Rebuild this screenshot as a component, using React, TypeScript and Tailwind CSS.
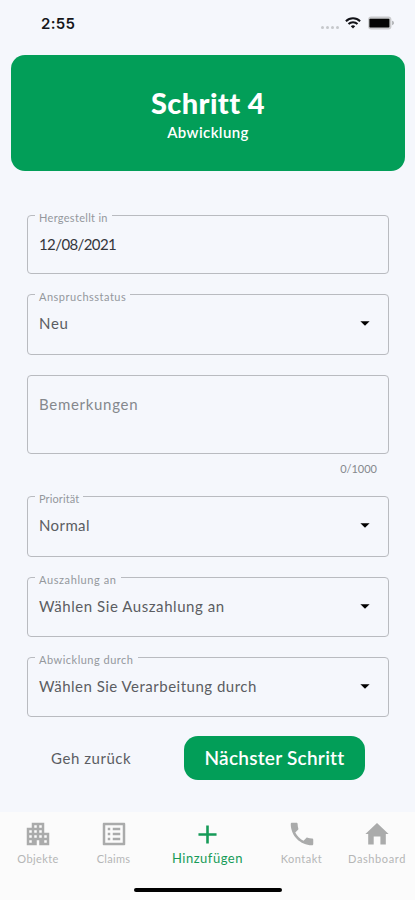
import type { ReactNode } from "react";
import { MdAdd, MdApartment, MdListAlt, MdPhone } from "react-icons/md";
import clsx from "clsx";

interface FieldProps {
  label: string;
  value: string;
  className: string;
  legendClass: string;
  valueClass: string;
  select?: boolean;
}

function Field({ label, value, className, legendClass, valueClass, select = false }: FieldProps) {
  return (
    <fieldset className={clsx("rounded-[4px] border border-[#b9bbc0] pl-[7px] pr-[18px]", className)}>
      <legend className="h-[10px] px-1 text-[11px] leading-[16px] text-[#94979c]">
        <span className={clsx("block whitespace-nowrap", legendClass)}>{label}</span>
      </legend>
      <div className="flex h-[48px] items-center justify-between pl-1">
        <span className={clsx("whitespace-nowrap text-[15px] leading-5", valueClass)}>{value}</span>
        {select && (
          <svg width="10" height="5" viewBox="0 0 10 5" className="fill-black">
            <path d="M.4.2h9.2L5 4.8z" />
          </svg>
        )}
      </div>
    </fieldset>
  );
}

function HomeIcon() {
  return (
    <svg width="24" height="22" viewBox="0 0 24 22" className="fill-current">
      <path d="M12 0l11.6 11h-2.8v10.6h-5.4v-8.1H8.7v8.1H3.2V11H.4z" />
    </svg>
  );
}

interface TabProps {
  label: string;
  icon: ReactNode;
  width: string;
  labelClass: string;
  active?: boolean;
}

function Tab({ label, icon, width, labelClass, active = false }: TabProps) {
  return (
    <button className={clsx("flex shrink-0 flex-col items-center", width, active ? "text-[#169b58]" : "text-[#aaabab]")}>
      <span className="flex h-[30px] items-center justify-center">{icon}</span>
      <span className={clsx("whitespace-nowrap", labelClass)}>{label}</span>
    </button>
  );
}

function StatusBar() {
  return (
    <header className="flex h-[55px] items-start justify-between pl-[41px] pr-[20px] pt-[14px]">
      <span className="font-['Inter',sans-serif] text-[15px] font-semibold leading-[19px] tracking-[0.3px] text-[#16171b]">2:55</span>
      <div className="flex h-[18px] items-center">
        <div className="mr-[6px] mt-[8px] flex gap-[2px]">
          <i className="size-[3px] rounded-full bg-[#c6c8cc]" />
          <i className="size-[3px] rounded-full bg-[#c6c8cc]" />
          <i className="size-[3px] rounded-full bg-[#c6c8cc]" />
          <i className="size-[3px] rounded-full bg-[#c6c8cc]" />
        </div>
        <svg width="16" height="12" viewBox="0 0 16 12" fill="none" className="mr-[7px] stroke-[#111217]" strokeWidth="2">
          <path d="M.9 4.2a10.2 10.2 0 0 1 14.2 0M3.5 7a6.4 6.4 0 0 1 9 0" />
          <path d="M8 11.6L5.8 9.3a3.2 3.2 0 0 1 4.4 0z" className="fill-[#111217]" stroke="none" />
        </svg>
        <svg width="27" height="14" viewBox="0 0 27 14">
          <rect x=".2" y=".4" width="23.2" height="13.2" rx="3" fill="#c9cacc" />
          <rect x="1.4" y="2.7" width="20" height="8.8" rx=".8" fill="#050505" />
          <path d="M24.2 4.8c2.2.5 2.2 3.9 0 4.4z" fill="#a8aaac" />
        </svg>
      </div>
    </header>
  );
}

export default function App() {
  return (
    <div className="flex h-[900px] w-[415px] flex-col overflow-hidden bg-[#f5f7fc] font-['Lato','Open_Sans',sans-serif]">
      <StatusBar />

      <section className="mx-[11px] mr-[10px] flex h-[116px] flex-col items-center rounded-[14px] bg-[#029e58] pt-[31px] text-white">
        <h1 className="text-[29px] font-black leading-[34px] tracking-[0.4px]">Schritt 4</h1>
        <p className="text-[15px] font-semibold leading-[25px] tracking-[0.4px]">Abwicklung</p>
      </section>

      <main className="flex flex-1 flex-col pl-[27px] pr-[26px] pt-[39px]">
        <Field label="Hergestellt in" value="12/08/2021" className="h-[64px]" legendClass="tracking-[0.3px]" valueClass="tracking-[-0.6px] text-[#34363b]" />
        <Field label="Anspruchsstatus" value="Neu" select className="mt-[15px] h-[66px]" legendClass="tracking-[0.5px]" valueClass="tracking-[0.7px] text-[#5b5d62]" />

        <div className="mt-5 h-[79px] rounded-[4px] border border-[#b9bbc0] px-[11px] pt-[16px]">
          <span className="text-[15px] leading-5 tracking-[0.7px] text-[#85888d]">Bemerkungen</span>
        </div>
        <p className="mt-[7px] h-4 pr-[12px] text-right text-[11px] leading-4 text-[#85888d]">0/1000</p>

        <Field label="Priorität" value="Normal" select className="mt-[14px] h-[66px]" legendClass="tracking-[0.1px]" valueClass="tracking-[0.4px] text-[#5b5d62]" />
        <Field label="Auszahlung an" value="Wählen Sie Auszahlung an" select className="mt-[15px] h-[65px]" legendClass="tracking-[0.6px]" valueClass="tracking-[0.56px] text-[#5b5d62]" />
        <Field label="Abwicklung durch" value="Wählen Sie Verarbeitung durch" select className="mt-[15px] h-[65px]" legendClass="tracking-[0.5px]" valueClass="tracking-[0.5px] text-[#5b5d62]" />

        <div className="mt-[19px] flex h-[44px] items-center pl-[24px]">
          <button className="w-[80px] whitespace-nowrap text-left text-[15px] leading-5 tracking-[0.55px] text-[#5b5d62]">Geh zurück</button>
          <button className="ml-[53px] h-[44px] w-[181px] whitespace-nowrap rounded-[14px] bg-[#029e58] text-[19px] font-semibold tracking-[0.25px] text-white">
            Nächster Schritt
          </button>
        </div>
      </main>

      <footer className="flex h-[88px] shrink-0 flex-col items-center bg-[#fbfbfb] pt-[7px]">
        <nav className="flex h-[68px] w-full">
          <Tab label="Objekte" icon={<MdApartment size={30} />} width="w-[76px]" labelClass="text-[11px] leading-5 tracking-[0.4px] text-[#b5b6b6]" />
          <Tab label="Claims" icon={<MdListAlt size={30} />} width="w-[75px]" labelClass="text-[11px] leading-5 tracking-[0.3px] text-[#b5b6b6]" />
          <Tab label="Hinzufügen" icon={<MdAdd size={31} />} width="w-[113px]" labelClass="text-[13px] leading-[18px] tracking-[0.5px]" active />
          <Tab label="Kontakt" icon={<MdPhone size={30} />} width="w-[75px]" labelClass="text-[11px] leading-5 tracking-[0.5px] text-[#b5b6b6]" />
          <Tab label="Dashboard" icon={<HomeIcon />} width="w-[76px]" labelClass="text-[11px] leading-5 tracking-[0.6px] text-[#b5b6b6]" />
        </nav>
        <div className="mt-[1px] h-[4px] w-[148px] rounded-full bg-black" />
      </footer>
    </div>
  );
}
